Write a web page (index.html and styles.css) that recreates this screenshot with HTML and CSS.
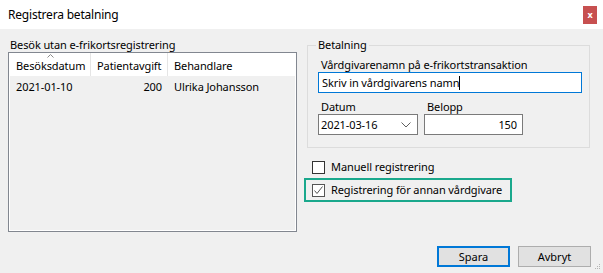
FILE: index.html
```html
<!DOCTYPE html>
<html lang="sv">
<head>
  <meta charset="UTF-8">
  <title>Registrera betalning</title>
  <link rel="stylesheet" href="styles.css">
</head>
<body>

  <div class="window">
    <div class="titlebar">
      <span class="title">Registrera betalning</span>
      <span class="close">x</span>
    </div>

    <div class="main">
      <div class="left">
        <div class="group-label">Besök utan e-frikortsregistrering</div>
        <div class="listview">
          <div class="lv-row lv-header">
            <div class="col col-date">
              <svg class="sort" width="7" height="4" viewBox="0 0 7 4"><path d="M0.5 3.5 L3.5 0.5 L6.5 3.5" fill="none" stroke="#8a8a8a" stroke-width="1"/></svg>
              Besöksdatum
            </div>
            <div class="col col-fee">Patientavgift</div>
            <div class="col col-name">Behandlare</div>
          </div>
          <div class="lv-row lv-item">
            <div class="col col-date">2021-01-10</div>
            <div class="col col-fee num">200</div>
            <div class="col col-name">Ulrika Johansson</div>
          </div>
        </div>
      </div>

      <div class="right">
        <fieldset class="groupbox">
          <legend>Betalning</legend>
          <div class="field-label">Vårdgivarenamn på e-frikortstransaktion</div>
          <div class="textbox focused">Skriv in vårdgivarens namn<span class="caret"></span></div>
          <div class="field-row">
            <div class="field date">
              <div class="field-label">Datum</div>
              <div class="combo">
                <span>2021-03-16</span>
                <svg width="10" height="6" viewBox="0 0 10 6"><path d="M0.5 0.5 L5 5 L9.5 0.5" fill="none" stroke="#606060" stroke-width="1"/></svg>
              </div>
            </div>
            <div class="field amount">
              <div class="field-label">Belopp</div>
              <div class="textbox num">150</div>
            </div>
          </div>
        </fieldset>

        <div class="check-row">
          <span class="checkbox"></span>
          <span>Manuell registrering</span>
        </div>
        <div class="check-row highlight">
          <span class="checkbox checked">
            <svg width="11" height="11" viewBox="0 0 11 11"><path d="M1.5 5.5 L4 8.5 L9.5 1.5" fill="none" stroke="#555" stroke-width="1"/></svg>
          </span>
          <span>Registrering för annan vårdgivare</span>
        </div>
      </div>
    </div>

    <div class="buttons">
      <button class="btn default">Spara</button>
      <button class="btn">Avbryt</button>
    </div>

    <svg class="grip" width="6" height="6" viewBox="0 0 6 6">
      <rect x="4" y="0" width="1" height="1" fill="#b4b4b4"/>
      <rect x="2" y="2" width="1" height="1" fill="#b4b4b4"/>
      <rect x="4" y="2" width="1" height="1" fill="#b4b4b4"/>
      <rect x="0" y="4" width="1" height="1" fill="#b4b4b4"/>
      <rect x="2" y="4" width="1" height="1" fill="#b4b4b4"/>
      <rect x="4" y="4" width="1" height="1" fill="#b4b4b4"/>
    </svg>
  </div>

</body>
</html>
```

FILE: styles.css
```css
body {
  margin: 0;
  font-family: 'Noto Sans', sans-serif;
  font-size: 11px;
  letter-spacing: -0.1px;
  line-height: 14px;
  color: #000;
  background: #f0f0f0;
}

.window {
  position: relative;
  width: 603px;
  height: 273px;
  background: #f0f0f0;
  display: flex;
  flex-direction: column;
  overflow: hidden;
}

.titlebar {
  height: 29px;
  background: #fff;
  display: flex;
  align-items: center;
  padding-left: 8px;
  flex-shrink: 0;
}

.title {
  font-size: 12px;
  letter-spacing: -0.2px;
}

.close {
  margin-left: auto;
  margin-right: 6px;
  align-self: flex-start;
  margin-top: 6px;
  width: 14px;
  height: 18px;
  background: #c75050;
  color: #fff;
  font-weight: bold;
  font-size: 9px;
  display: flex;
  align-items: center;
  justify-content: center;
}

.main {
  flex: 1;
  display: flex;
  gap: 7px;
  padding-left: 8px;
}

.left {
  width: 289px;
  padding-top: 9px;
}

.group-label {
  height: 14px;
  padding-left: 2px;
}

.listview {
  height: 180px;
  box-sizing: border-box;
  border: 1px solid #828790;
  box-shadow: inset 0 0 0 1px #fff;
}

.lv-row {
  display: flex;
  white-space: nowrap;
}

.lv-header {
  position: relative;
  height: 23px;
  margin: 0 1px;
  background: #fff;
}

.lv-header .col {
  padding-top: 6px;
  border-right: 1px solid #e5e5e5;
  position: relative;
}

.lv-item .col {
  padding-top: 4px;
  height: 20px;
}

.col {
  box-sizing: border-box;
  padding-left: 6px;
  padding-right: 6px;
}

.col-date {
  width: 81px;
}

.lv-item .col-date {
  margin-left: 1px;
}

.col-fee {
  width: 77px;
}

.col-name {
  flex: 1;
}

.lv-header .col-name {
  border-right: none;
}

.num {
  text-align: right;
}

.sort {
  position: absolute;
  top: 1px;
  left: 37px;
}

.right {
  width: 287px;
  white-space: nowrap;
}

.groupbox {
  box-sizing: border-box;
  width: 283px;
  margin: 9px 0 0 3px;
  padding: 6px 7px 12px 10px;
  border: 1px solid #dcdcdc;
  min-width: 0;
}

.groupbox legend {
  padding: 0 2px;
  margin-left: -2px;
  line-height: 14px;
}

.field-label {
  padding-left: 3px;
  height: 14px;
}

.textbox {
  box-sizing: border-box;
  height: 21px;
  padding: 3px 5px 0 3px;
  background: #fff;
  border: 1px solid #7a7a7a;
}

.textbox.focused {
  border-color: #0078d7;
}

.caret {
  display: inline-block;
  width: 1px;
  height: 14px;
  background: #000;
  vertical-align: -3px;
}

.field-row {
  display: flex;
  gap: 6px;
  margin-top: 7px;
}

.field.date {
  width: 100px;
}

.field.amount {
  width: 99px;
}

.combo {
  box-sizing: border-box;
  height: 21px;
  padding: 3px 6px 0 2px;
  background: #fff;
  border: 1px solid #7a7a7a;
  display: flex;
  justify-content: space-between;
}

.combo svg {
  margin-top: 4px;
}

.check-row {
  display: flex;
  align-items: center;
  gap: 6px;
  height: 20px;
  padding-left: 8px;
  margin-top: 9px;
}

.check-row.highlight {
  box-sizing: border-box;
  width: 208px;
  height: 24px;
  margin-top: 1px;
  padding-left: 6px;
  border: 2px solid #1aa88c;
}

.checkbox {
  box-sizing: border-box;
  width: 13px;
  height: 13px;
  border: 1px solid #333;
  background: #fff;
  display: flex;
}

.checkbox.checked {
  border-color: #555;
}

.buttons {
  display: flex;
  justify-content: flex-end;
  gap: 8px;
  padding: 0 12px 6px 0;
}

.btn {
  box-sizing: border-box;
  width: 73px;
  height: 21px;
  padding: 0;
  font-family: 'Noto Sans', sans-serif;
  font-size: 11px;
  color: #000;
  background: #e1e1e1;
  border: 1px solid #adadad;
}

.btn.default {
  border: 2px solid #0078d7;
}

.grip {
  position: absolute;
  right: 2px;
  bottom: 3px;
}
```
